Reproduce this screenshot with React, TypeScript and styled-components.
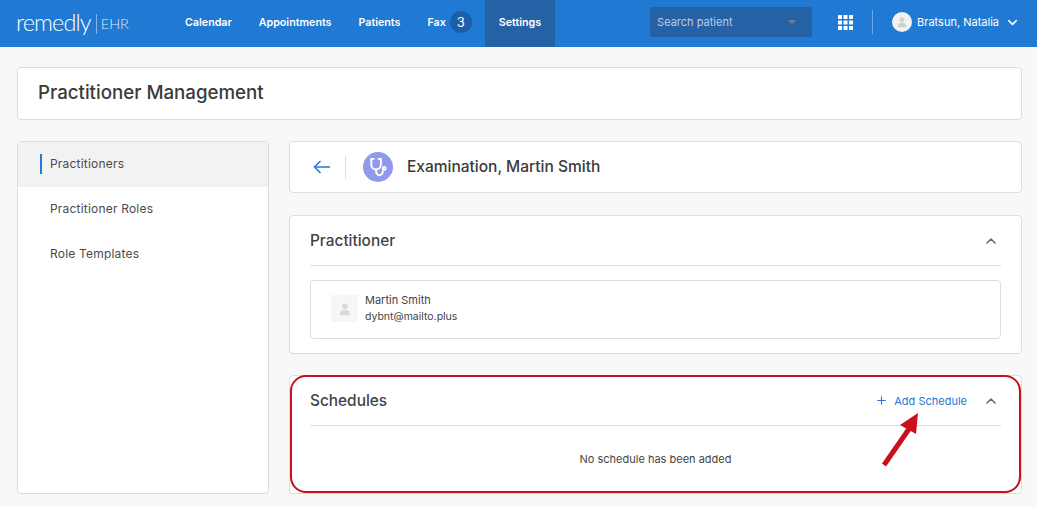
import React from 'react';
import styled, { createGlobalStyle } from 'styled-components';
import { ChevronDown, ChevronUp, Plus } from 'lucide-react';

const GlobalStyle = createGlobalStyle`
  html, body {
    margin: 0;
    height: 100%;
    overflow: hidden;
    background: #f8f8f8;
    font-family: Inter, "Liberation Sans", sans-serif;
  }
  * { box-sizing: border-box; }
`;

const Page = styled.div`
  height: 507px;
  overflow: hidden;
  display: flex;
  flex-direction: column;
`;

const Header = styled.header`
  height: 47px;
  flex: none;
  background: #2079d2;
  display: flex;
  align-items: stretch;
  color: #fff;
`;

const Logo = styled.div`
  width: 171.5px;
  padding-left: 16px;
  display: flex;
  align-items: center;
  font-family: Lato, sans-serif;
`;

const LogoName = styled.span`
  font-size: 23.5px;
  font-weight: 300;
  letter-spacing: -0.9px;
  line-height: 47px;
  margin-top: -3px;
`;

const LogoRule = styled.span`
  width: 1px;
  height: 20px;
  margin: 0 4px 0 5px;
  background: rgba(255, 255, 255, 0.45);
`;

const LogoTag = styled.span`
  font-size: 14.5px;
  font-weight: 300;
  color: #dce9f7;
`;

const Nav = styled.nav`
  display: flex;
  align-items: stretch;
`;

const NavItem = styled.a<{ $active?: boolean }>`
  display: flex;
  align-items: center;
  padding: 0 13.5px 3px;
  font-size: 10.7px;
  font-weight: 600;
  background: ${props => (props.$active ? '#2562a5' : 'transparent')};
`;

const Badge = styled.span`
  width: 22px;
  height: 22px;
  margin-left: 4px;
  border-radius: 50%;
  background: #1b5fa8;
  display: flex;
  align-items: center;
  justify-content: center;
  font-size: 13px;
  font-weight: 400;
`;

const HeaderRight = styled.div`
  margin-left: auto;
  display: flex;
  align-items: center;
  padding: 0 17px 3px 0;
`;

const Search = styled.div`
  width: 162px;
  height: 30px;
  padding: 0 16px 0 7px;
  border-radius: 2px;
  background: #2562a5;
  display: flex;
  align-items: center;
  justify-content: space-between;
  font-size: 11px;
  color: #b9cde4;
`;

const Caret = styled.span`
  width: 0;
  height: 0;
  border-left: 4px solid transparent;
  border-right: 4px solid transparent;
  border-top: 4px solid #6f7f92;
`;

const Waffle = styled.svg`
  margin-left: 26px;
  display: block;
`;

const HeaderRule = styled.span`
  width: 1px;
  height: 24px;
  margin: 0 19px;
  background: rgba(255, 255, 255, 0.35);
`;

const UserAvatar = styled.span`
  width: 20px;
  height: 20px;
  border-radius: 50%;
  background: #f2f2f2;
  display: flex;
  align-items: center;
  justify-content: center;
`;

const UserName = styled.span`
  margin: 0 6px 0 5px;
  font-size: 11px;
`;

const Main = styled.main`
  position: relative;
  flex: 1;
  padding: 20px 15px 0 17px;
  display: flex;
  flex-direction: column;
  gap: 21px;
`;

const Card = styled.section`
  background: #fff;
  border: 1px solid #dcdcdc;
  border-radius: 4px;
`;

const TitleCard = styled(Card)`
  height: 53px;
  padding: 0 20px 3px;
  display: flex;
  align-items: center;
`;

const PageTitle = styled.h1`
  margin: 0;
  font-size: 18.7px;
  font-weight: 500;
  color: #3a3a3a;
`;

const Columns = styled.div`
  display: grid;
  grid-template-columns: 252px 1fr;
  gap: 20px;
`;

const Sidebar = styled(Card)`
  height: 353px;
  overflow: hidden;
`;

const SideItem = styled.div<{ $active?: boolean }>`
  position: relative;
  height: 45px;
  padding: 0 0 2px 32px;
  display: flex;
  align-items: center;
  font-size: 12px;
  letter-spacing: 0.2px;
  color: #4a4a4a;
  background: ${props => (props.$active ? '#f2f2f2' : '#fff')};

  ${props =>
    props.$active &&
    `&::before {
      content: '';
      position: absolute;
      left: 22px;
      top: 12px;
      width: 2px;
      height: 20px;
      background: #2079d2;
    }`}
`;

const Content = styled.div`
  display: flex;
  flex-direction: column;
`;

const PersonBar = styled(Card)`
  height: 52px;
  margin-bottom: 22px;
  padding-left: 23px;
  display: flex;
  align-items: center;
`;

const BarRule = styled.span`
  width: 1px;
  height: 23px;
  margin: 0 17px 0 15px;
  background: #dcdcdc;
`;

const RoleIcon = styled.span`
  width: 30px;
  height: 30px;
  border-radius: 50%;
  background: #9199ea;
  display: flex;
  align-items: center;
  justify-content: center;
`;

const PersonName = styled.h2`
  margin: 0 0 2px 14px;
  font-size: 15.5px;
  font-weight: 500;
  color: #3a3a3a;
`;

const Panel = styled(Card)<{ $height: number }>`
  height: ${props => props.$height}px;
  padding: 0 20px;
`;

const PanelHead = styled.div`
  height: 50px;
  border-bottom: 1px solid #dcdcdc;
  display: flex;
  align-items: center;
  justify-content: space-between;
`;

const PanelTitle = styled.h3`
  margin: 0;
  font-size: 15.4px;
  font-weight: 500;
  color: #444;
`;

const PanelActions = styled.div`
  display: flex;
  align-items: center;
  color: #666;
  padding-right: 2px;
`;

const AddLink = styled.a`
  display: flex;
  align-items: center;
  margin-right: 16px;
  font-size: 11px;
  color: #2079d2;
`;

const PlusMark = styled(Plus)`
  margin-right: 6px;
`;

const PersonRow = styled.div`
  height: 59px;
  margin-top: 14px;
  padding: 0 0 2px 20px;
  border: 1px solid #dcdcdc;
  border-radius: 4px;
  display: flex;
  align-items: center;
`;

const PersonThumb = styled.span`
  width: 27px;
  height: 27px;
  margin-right: 7px;
  background: #f6f6f6;
  display: flex;
  align-items: center;
  justify-content: center;
`;

const PersonText = styled.div`
  font-size: 11px;
  line-height: 16px;
  color: #444;
`;

const PersonMail = styled.div`
  margin-top: 1px;
  font-size: 10.5px;
`;

const EmptyNote = styled.div`
  padding-top: 26px;
  text-align: center;
  font-size: 11px;
  color: #444;
`;

const Spacer = styled.div`
  height: 21px;
`;

const Highlight = styled.div`
  position: absolute;
  left: 290px;
  top: 328px;
  width: 731px;
  height: 118px;
  border: 2px solid #c8111a;
  border-radius: 16px;
  pointer-events: none;
`;

const Arrow = styled.svg`
  position: absolute;
  left: 876px;
  top: 361px;
`;

const PersonGlyph: React.FC<{ size: number; color: string }> = ({ size, color }) => (
  <svg width={size} height={size} viewBox="0 0 16 16" fill={color}>
    <circle cx="8" cy="5" r="3.2" />
    <path d="M2.5 15v-2.2C2.5 10.2 5 9 8 9s5.500 1.200 5.500 3.800V15z" />
  </svg>
);

const App: React.FC = () => (
  <Page>
    <GlobalStyle />
    <Header>
      <Logo>
        <LogoName>remedly</LogoName>
        <LogoRule />
        <LogoTag>EHR</LogoTag>
      </Logo>
      <Nav>
        <NavItem>Calendar</NavItem>
        <NavItem>Appointments</NavItem>
        <NavItem>Patients</NavItem>
        <NavItem>
          Fax<Badge>3</Badge>
        </NavItem>
        <NavItem $active>Settings</NavItem>
      </Nav>
      <HeaderRight>
        <Search>
          Search patient
          <Caret />
        </Search>
        <Waffle width="15" height="15" viewBox="0 0 15 15" fill="#fff">
          {[0, 5.5, 11].flatMap(y =>
            [0, 5.5, 11].map(x => <rect key={`${x}-${y}`} x={x} y={y} width="4" height="4" />)
          )}
        </Waffle>
        <HeaderRule />
        <UserAvatar>
          <PersonGlyph size={12} color="#d0d0d0" />
        </UserAvatar>
        <UserName>Bratsun, Natalia</UserName>
        <ChevronDown size={15} strokeWidth={2.5} />
      </HeaderRight>
    </Header>
    <Main>
      <TitleCard>
        <PageTitle>Practitioner Management</PageTitle>
      </TitleCard>
      <Columns>
        <Sidebar>
          <SideItem $active>Practitioners</SideItem>
          <SideItem>Practitioner Roles</SideItem>
          <SideItem>Role Templates</SideItem>
        </Sidebar>
        <Content>
          <PersonBar>
            <svg width="17" height="14" viewBox="0 0 17 14" fill="none" stroke="#2079d2" strokeWidth="1.500">
              <path d="M17 7H1.500" />
              <path d="M7.500 1L1.500 7l6 6" />
            </svg>
            <BarRule />
            <RoleIcon>
              <svg width="23" height="23" viewBox="0 0 24 24" fill="none" stroke="#fff" strokeWidth="2" strokeLinecap="round">
                <path d="M7 3H4.500v6a5 5 0 0 0 10 0V3H12" />
                <path d="M9.500 14v2.500a3.500 3.500 0 0 0 7 0V15.500" />
                <circle cx="18" cy="13" r="1.500" />
              </svg>
            </RoleIcon>
            <PersonName>Examination, Martin Smith</PersonName>
          </PersonBar>
          <Panel $height={139}>
            <PanelHead>
              <PanelTitle>Practitioner</PanelTitle>
              <PanelActions>
                <ChevronUp size={16} strokeWidth={2.2} />
              </PanelActions>
            </PanelHead>
            <PersonRow>
              <PersonThumb>
                <PersonGlyph size={14} color="#dadada" />
              </PersonThumb>
              <PersonText>
                <div>Martin Smith</div>
                <PersonMail>dybnt@mailto.plus</PersonMail>
              </PersonText>
            </PersonRow>
          </Panel>
          <Spacer />
          <Panel $height={119}>
            <PanelHead>
              <PanelTitle>Schedules</PanelTitle>
              <PanelActions>
                <AddLink>
                  <PlusMark size={13} strokeWidth={2} />
                  Add Schedule
                </AddLink>
                <ChevronUp size={16} strokeWidth={2.2} />
              </PanelActions>
            </PanelHead>
            <EmptyNote>No schedule has been added</EmptyNote>
          </Panel>
        </Content>
      </Columns>
      <Highlight />
      <Arrow width="50" height="62" viewBox="0 0 50 62">
        <path d="M8 57 L33 21" stroke="#c8111a" strokeWidth="5" fill="none" />
        <path d="M42 5 L24 17 L40 26 Z" fill="#c8111a" />
      </Arrow>
    </Main>
  </Page>
);

export default App;
